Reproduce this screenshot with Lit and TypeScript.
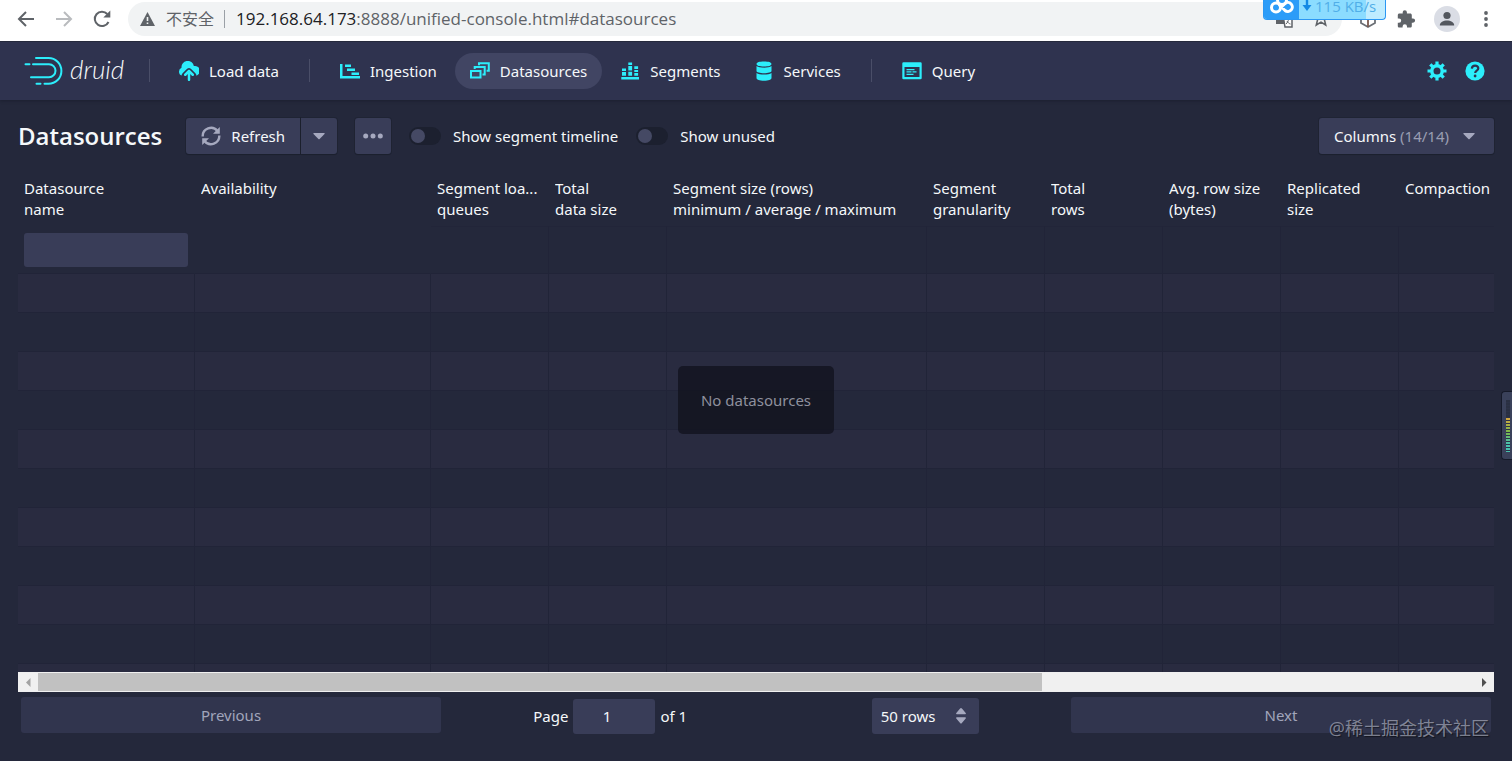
import { LitElement, html, css, svg } from "lit";
import { customElement, state } from "lit/decorators.js";

interface Column {
  width?: number;
  lines: string[];
  filterable?: boolean;
}

const COLUMNS: Column[] = [
  { width: 177, lines: ["Datasource", "name"], filterable: true },
  { width: 236, lines: ["Availability"] },
  { width: 118, lines: ["Segment loa...", "queues"] },
  { width: 118, lines: ["Total", "data size"] },
  { width: 260, lines: ["Segment size (rows)", "minimum / average / maximum"] },
  { width: 118, lines: ["Segment", "granularity"] },
  { width: 118, lines: ["Total", "rows"] },
  { width: 118, lines: ["Avg. row size", "(bytes)"] },
  { width: 118, lines: ["Replicated", "size"] },
  { lines: ["Compaction"] },
];

const PAD_ROWS = Array.from({ length: 40 }, (_, i) => i);

const icons = {
  load: svg`<path transform="scale(1.25)" d="M8.71 7.29C8.53 7.11 8.28 7 8 7s-.53.11-.71.29l-3 3a1 1 0 001.42 1.42L7 10.41V15c0 .55.45 1 1 1s1-.45 1-1v-4.59l1.29 1.29a1 1 0 001.42-1.41zM12 4h-.1A5 5 0 002 5.33 3.5 3.5 0 000 8.5c0 1.41.84 2.61 2.03 3.17.08-.74.38-1.3.84-1.79l3-3C6.44 6.31 7.2 5.6 8 5.6s1.56.7 2.12 1.28l3 3c.5.5.8 1.1.88 1.85A4 4 0 0012 4z"/>`,
  ingestion: svg`<path d="M0 3h2.500v12H20v2.500H0zM5 3.500h6V6H5zM7 7.500h8V10H7zM11.500 11.500H19V14h-7.500z"/>`,
  datasources: svg`<g fill="none" stroke="currentColor" stroke-width="2"><path d="M1 10h9.500v6.500H1z"/><path d="M4.700 8V6h10v7.500H12.500"/><path d="M9 4.300V2.300h9.800v7.500h-2.200"/></g>`,
  segments: svg`<path d="M1.300 16h17.700v2.500H1.300zM2 7.500h4V10H2zM2 11h4v3.700H2zM8.300 1.500h3.800V4H8.300zM8.300 5h3.800v4.500H8.300zM8.300 10.700h3.800v4H8.300zM14.300 5.200h3.800V8h-3.800zM14.300 9h3.800v2h-3.800zM14.300 12h3.800v2.700h-3.800z"/>`,
  services: svg`<path d="M2.500 3C2.500 1.300 5.500.5 10 .5s7.500.8 7.500 2.500S14.500 5.500 10 5.500 2.500 4.700 2.500 3zM2.500 5c1.500 1.200 4.500 1.700 7.500 1.700S16 6.200 17.500 5v5c0 1.400-3.500 2.200-7.500 2.200S2.500 11.400 2.500 10zM2.500 12c1.500 1.100 4.500 1.600 7.500 1.600s6-.5 7.500-1.600v5c0 1.700-3 2.700-7.500 2.700S2.500 18.700 2.500 17z"/>`,
  query: svg`<path fill-rule="evenodd" d="M1.500 1.200h17a1.200 1.200 0 011.200 1.200v14.700a1.200 1.200 0 01-1.200 1.200h-17a1.200 1.200 0 01-1.200-1.200V2.400a1.200 1.200 0 011.200-1.200zM2.500 6v10h15V6z"/><path d="M4.500 8h8v1.200h-8zM4.500 10.300h5v1.200h-5zM10.500 10.300h4v1.200h-4zM4.500 12.700h7v1.200h-7z"/>`,
  gear: svg`<circle cx="10" cy="10" r="5.200" fill="none" stroke="currentColor" stroke-width="3.400"/>${[0, 45, 90, 135].map(
    (a) => svg`<path d="M10 .5v4M10 15.500v4" stroke="currentColor" stroke-width="3.200" transform="rotate(${a} 10 10)"/>`
  )}`,
  help: svg`<circle cx="10" cy="10" r="9.600"/><path d="M6.800 7.600c.2-1.900 1.500-3 3.300-3s3.200 1 3.200 2.700c0 2.400-3.100 2.300-3.100 4.700" fill="none" stroke="#2f334f" stroke-width="2.200"/><circle cx="10.100" cy="15" r="1.400" fill="#2f334f"/>`,
  refresh: svg`<g fill="none" stroke="currentColor" stroke-width="2.400"><path d="M1.700 10.500A8.300 8.300 0 0116.500 5"/><path d="M18.300 9.500A8.300 8.300 0 013.500 15"/></g><path d="M18.800 1v6.800H12zM1.200 19v-6.800H8z"/>`,
  caret: svg`<path d="M4.700 7h10.600q.8.300.2 1L10.600 13q-.6.500-1.200 0L4.500 8q-.5-.7.200-1z"/>`,
  more: svg`<circle cx="2.700" cy="10" r="2.500"/><circle cx="10" cy="10" r="2.500"/><circle cx="17.300" cy="10" r="2.500"/>`,
};

const icon = (shape: unknown) =>
  html`<svg class="icon" viewBox="0 0 20 20" width="20" height="20" fill="currentColor" aria-hidden="true">${shape}</svg>`;

@customElement("browser-bar")
class BrowserBar extends LitElement {
  static styles = css`
    :host {
      display: flex;
      align-items: center;
      position: relative;
      flex: none;
      height: 41px;
      box-sizing: border-box;
      padding: 0 14px 3px 15px;
      background: #fff;
      color: #5f6368;
      font: 16px/20px "Open Sans", "Noto Sans CJK SC", sans-serif;
    }
    button {
      display: flex;
      border: 0;
      padding: 0;
      background: none;
      color: inherit;
    }
    .history { display: flex; gap: 16px; margin-right: 15px; }
    .faded { color: #b9bbbe; }
    .address {
      display: flex;
      align-items: center;
      flex: 1;
      height: 34px;
      padding: 0 12px;
      border-radius: 17px;
      background: #f1f3f4;
    }
    .warning { margin-right: 11px; }
    .separator { width: 1px; height: 18px; margin: 0 11px 0 10px; background: #9aa0a6; }
    .url { flex: 1; font-size: 17px; white-space: nowrap; }
    .host { color: #202124; }
    .page-actions { display: flex; gap: 18px; }
    .extensions { display: flex; align-items: center; gap: 18px; margin-left: 16px; }
    .avatar { border-radius: 50%; background: #dadde5; }
    .speed {
      position: absolute;
      top: 0;
      right: 126px;
      display: flex;
      box-sizing: border-box;
      height: 20px;
      width: 123px;
      overflow: hidden;
      border: 1px solid #2b97f3;
      border-top: 0;
      border-radius: 0 0 4px 4px;
      background: linear-gradient(90deg, #8bdcff 84%, #bfecff 84%);
      color: #50aee8;
      font-size: 15px;
      line-height: 12px;
      white-space: nowrap;
    }
    .cloud { flex: none; margin-right: 2px; background: #2c9cf8; }
    .down { flex: none; margin-right: 2px; }
  `;

  render() {
    return html`
      <div class="history">
        <button aria-label="Back">
          <svg width="22" height="22" viewBox="0 0 22 22" fill="none" stroke="currentColor" stroke-width="2"><path d="M19 11H4.500M11 4l-7 7 7 7" /></svg>
        </button>
        <button class="faded" aria-label="Forward">
          <svg width="22" height="22" viewBox="0 0 22 22" fill="none" stroke="currentColor" stroke-width="2"><path d="M3 11h14.500M11 4l7 7-7 7" /></svg>
        </button>
        <button aria-label="Reload">
          <svg width="22" height="22" viewBox="0 0 22 22"><path d="M17.500 14A7.200 7.200 0 1116.300 6" fill="none" stroke="currentColor" stroke-width="2" /><path d="M19.300 2.500v7h-7z" fill="currentColor" /></svg>
        </button>
      </div>
      <div class="address">
        <svg class="warning" width="15" height="14" viewBox="0 0 15 14"><path d="M7.500 0L15 14H0z" fill="currentColor" /><path d="M7.500 5v4M7.500 10.500v1.600" stroke="#f1f3f4" stroke-width="1.600" /></svg>
        <span>不安全</span>
        <span class="separator"></span>
        <span class="url"><span class="host">192.168.64.173</span>:8888/unified-console.html#datasources</span>
        <div class="page-actions">
          <button aria-label="Translate">
            <svg width="20" height="20" viewBox="0 0 20 20"><path d="M2 2h9l4 13H2z" fill="currentColor" /><path d="M9 6h9v12h-7z" fill="#fff" stroke="currentColor" stroke-width="1.500" /><path d="M12 10h5M14.500 9v1c0 2-1 3.500-2.500 5M13 12c1 2 2 2.500 3.500 3" fill="none" stroke="currentColor" /></svg>
          </button>
          <button aria-label="Bookmark">
            <svg width="18" height="18" viewBox="0 0 18 18" fill="none" stroke="currentColor" stroke-width="1.600"><path d="M9 1.500l2.100 5 5.400.5-4.100 3.600 1.300 5.400L9 13.100 4.300 16l1.300-5.400L1.500 7l5.400-.5z" /></svg>
          </button>
        </div>
      </div>
      <div class="extensions">
        <button aria-label="Package extension">
          <svg width="20" height="20" viewBox="0 0 20 20" fill="none" stroke-width="1.800"><path d="M10 2l7 4v8l-7 4-7-4V6z" stroke="#6b6f75" /><path d="M3 6l7 4 7-4M10 10v8" stroke="#7b5a50" /></svg>
        </button>
        <button aria-label="Extensions">
          <svg width="20" height="20" viewBox="0 0 20 20" fill="currentColor"><path d="M17 9.500h-1.200V6.200c0-.9-.7-1.600-1.600-1.600h-3.300V3.300a2.100 2.100 0 00-4.200 0v1.300H3.400c-.9 0-1.600.7-1.600 1.600v3.200H3a2.200 2.200 0 010 4.400H1.800V17c0 .9.700 1.600 1.600 1.600h3.200v-1.200a2.200 2.200 0 014.400 0v1.200h3.200c.9 0 1.600-.7 1.600-1.600v-3.300H17a2.100 2.100 0 000-4.200z" /></svg>
        </button>
        <button class="avatar" aria-label="Profile">
          <svg width="26" height="26" viewBox="0 0 26 26" fill="#53575e"><circle cx="13" cy="9.500" r="3.600" /><path d="M5.800 19.500c0-3.500 3.600-5 7.200-5s7.200 1.500 7.200 5z" /></svg>
        </button>
        <button aria-label="Menu">
          <svg width="20" height="20" viewBox="0 0 20 20" fill="currentColor"><circle cx="8" cy="4" r="1.900" /><circle cx="8" cy="10" r="1.900" /><circle cx="8" cy="16" r="1.900" /></svg>
        </button>
      </div>
      <div class="speed">
        <svg class="cloud" width="35" height="20" viewBox="0 0 35 20" fill="none" stroke="#fff" stroke-width="3"><circle cx="18" cy="0" r="4.500" /><circle cx="12" cy="7.500" r="4.500" /><path d="M15 4.500l6 6a4.500 4.500 0 100-7l-4 4" /></svg>
        <svg class="down" width="12" height="12" viewBox="0 0 12 12"><path d="M6 0v6" stroke="#1489e4" stroke-width="2.400" /><path d="M1.500 5h9L6 11z" fill="#1489e4" /></svg>
        <span>115 KB/s</span>
      </div>
    `;
  }
}

@customElement("console-header")
class ConsoleHeader extends LitElement {
  static styles = css`
    :host {
      display: flex;
      align-items: center;
      flex: none;
      height: 59px;
      box-sizing: border-box;
      padding: 0 27px 0 24px;
      background: #2f334f;
      box-shadow: inset 0 1px 0 #25293c, 0 1px 3px rgba(16, 18, 30, 0.4);
      color: #f5f8fa;
      font: 15px/20px "Noto Sans", "Open Sans", sans-serif;
    }
    a { color: inherit; text-decoration: none; }
    .logo { display: flex; align-items: center; gap: 6px; width: 110px; }
    .wordmark { font: italic 300 26px/32px Lato, sans-serif; padding-bottom: 4px; }
    nav { display: flex; align-items: center; gap: 3px; flex: 1; }
    .item {
      display: flex;
      align-items: center;
      gap: 10px;
      height: 36px;
      padding: 0 15px;
      border-radius: 18px;
    }
    .active { background: #414563; }
    .divider { width: 1px; height: 23px; margin: 0 12px; background: #4a4e68; }
    .logo + .divider { margin: 0 14px 0 15px; }
    .icon { color: #2ceefb; display: block; }
    .tools { display: flex; gap: 18px; }
    .tools button { border: 0; padding: 0; background: none; }
  `;

  private item(label: string, shape: unknown, active = false) {
    return html`<a class="item ${active ? "active" : ""}" href="#${label.toLowerCase().replace(" ", "-")}">${icon(shape)}<span>${label}</span></a>`;
  }

  render() {
    return html`
      <a class="logo" href="#" aria-label="druid home">
        <svg width="40" height="30" viewBox="0 0 40 30" fill="none" stroke="#2ceefb" stroke-width="2" stroke-linecap="round">
          <path d="M12 2h12.500a12.900 12.900 0 010 25.800H20.500M12.500 27.800H16.500M9 8.200h16a6.500 6.500 0 010 13H7M1.500 8.200h4" />
        </svg>
        <span class="wordmark">druid</span>
      </a>
      <span class="divider"></span>
      <nav>
        ${this.item("Load data", icons.load)}
        <span class="divider"></span>
        ${this.item("Ingestion", icons.ingestion)}
        ${this.item("Datasources", icons.datasources, true)}
        ${this.item("Segments", icons.segments)}
        ${this.item("Services", icons.services)}
        <span class="divider"></span>
        ${this.item("Query", icons.query)}
      </nav>
      <div class="tools">
        <button aria-label="Settings">${icon(icons.gear)}</button>
        <button aria-label="Help">${icon(icons.help)}</button>
      </div>
    `;
  }
}

@customElement("datasources-view")
class DatasourcesView extends LitElement {
  @state() private timeline = false;
  @state() private unused = false;

  static styles = css`
    :host {
      display: flex;
      flex-direction: column;
      flex: 1;
      min-height: 0;
      padding: 18px 18px 27px;
      color: #f5f8fa;
      font: 15px/21px "Noto Sans", "Open Sans", sans-serif;
    }
    button, input, select { font: inherit; color: inherit; }
    .toolbar { display: flex; align-items: center; gap: 18px; margin-bottom: 18px; }
    h1 { margin: 0 6px 0 0; font: 600 24px/36px "Open Sans", sans-serif; }
    .btn {
      display: flex;
      align-items: center;
      justify-content: center;
      gap: 10px;
      height: 36px;
      box-sizing: border-box;
      padding: 0 15px;
      border: 0;
      border-radius: 3px;
      background: #393d58;
      box-shadow: 0 0 0 1px rgba(16, 22, 26, 0.2), 0 1px 1px rgba(16, 22, 26, 0.2);
    }
    .group { display: flex; gap: 1px; }
    .group .btn:first-child { border-radius: 3px 0 0 3px; }
    .group .btn:last-child { border-radius: 0 3px 3px 0; }
    .square { width: 36px; padding: 0; }
    .icon { flex: none; color: #a6a9bf; }
    .switch { display: flex; align-items: center; gap: 12px; }
    .switch input {
      appearance: none;
      display: flex;
      align-items: center;
      width: 32px;
      height: 18px;
      margin: 0;
      padding: 0 2px;
      border-radius: 9px;
      background: #1c202f;
    }
    .switch input::before { content: ""; width: 14px; height: 14px; border-radius: 50%; background: #454964; }
    .switch input:checked { justify-content: flex-end; background: #2ceefb; }
    .columns { margin-left: auto; }
    .muted { color: #9a9db2; }
    .table-area { position: relative; flex: 1; min-height: 0; overflow: hidden; }
    table { width: 100%; table-layout: fixed; border-collapse: separate; border-spacing: 0; }
    th, td { box-sizing: border-box; border-right: 1px solid #212438; text-align: left; font-weight: 400; vertical-align: top; }
    th { height: 54px; padding: 6px 5px 6px 6px; border-color: transparent; }
    th:last-child { padding-right: 0; }
    th:last-child, td:last-child { border-right: 0; }
    .line { display: block; overflow: hidden; text-overflow: ellipsis; white-space: nowrap; }
    .filters td { height: 47px; padding: 6px; border-top: 1px solid #222539; border-bottom: 1px solid #212438; }
    .filters td:nth-child(-n + 2) { border-right-color: transparent; border-top-color: transparent; }
    .filter {
      display: block;
      width: 100%;
      height: 34px;
      box-sizing: border-box;
      padding: 0 10px;
      border: 0;
      border-radius: 3px;
      background: #393d58;
    }
    .pad td { height: 39px; padding: 0; border-bottom: 1px solid #212438; }
    .pad:nth-child(odd) td { background: #292b40; }
    .empty {
      position: absolute;
      inset: 0 0 44px;
      width: fit-content;
      height: fit-content;
      margin: auto;
      padding: 23px;
      border-radius: 5px;
      background: rgba(16, 18, 28, 0.75);
      color: #8e909d;
      line-height: 22px;
    }
    .scrollbar { display: flex; flex: none; height: 20px; background: #f0f0f0; }
    .scrollbar button { width: 20px; padding: 0; border: 0; background: none; color: #505050; }
    .scrollbar button:disabled { color: #a3a3a3; }
    .scrollbar svg { display: block; }
    .track { flex: 1; padding: 1px 0; }
    .thumb { height: 18px; background: #c1c1c1; }
    .pagination { position: relative; display: flex; flex: none; padding: 5px 3px 0; }
    .step { flex: 1 1 0; }
    .step .btn { width: 100%; background: #31354e; color: #a1a5bb; box-shadow: none; }
    .center { display: flex; flex: 1.5 1 0; justify-content: space-around; align-items: center; padding-top: 1px; }
    .page { display: flex; align-items: center; gap: 5px; }
    .page input {
      width: 82px;
      height: 35px;
      box-sizing: border-box;
      border: 0;
      border-radius: 3px;
      padding: 0 10px;
      background: #393d58;
      text-align: center;
    }
    .size { position: relative; display: flex; align-items: center; }
    .size select {
      appearance: none;
      width: 107px;
      height: 36px;
      border: 0;
      border-radius: 3px;
      padding: 0 30px 0 9px;
      background: #393d58;
    }
    .size svg { position: absolute; right: 13px; pointer-events: none; color: #a6a9bf; }
    .watermark {
      position: absolute;
      right: 5px;
      top: 23px;
      color: rgba(190, 193, 208, 0.6);
      font: 18px/26px "Open Sans", "Noto Sans CJK SC", sans-serif;
      text-shadow: 1px 1px 1px rgba(0, 0, 0, 0.5);
      pointer-events: none;
    }
  `;

  render() {
    return html`
      <div class="toolbar">
        <h1>Datasources</h1>
        <div class="group">
          <button class="btn">${icon(icons.refresh)}Refresh</button>
          <button class="btn square" aria-label="Refresh interval">${icon(icons.caret)}</button>
        </div>
        <button class="btn square" aria-label="More">${icon(icons.more)}</button>
        <label class="switch">
          <input type="checkbox" role="switch" .checked=${this.timeline} @change=${() => (this.timeline = !this.timeline)} />
          Show segment timeline
        </label>
        <label class="switch">
          <input type="checkbox" role="switch" .checked=${this.unused} @change=${() => (this.unused = !this.unused)} />
          Show unused
        </label>
        <button class="btn columns"><span>Columns <span class="muted">(14/14)</span></span>${icon(icons.caret)}</button>
      </div>

      <div class="table-area">
        <table>
          <colgroup>
            ${COLUMNS.map((c) => html`<col width=${c.width ?? "auto"} />`)}
          </colgroup>
          <thead>
            <tr>
              ${COLUMNS.map((c) => html`<th scope="col">${c.lines.map((l) => html`<span class="line">${l}</span>`)}</th>`)}
            </tr>
            <tr class="filters">
              ${COLUMNS.map((c) => html`<td>${c.filterable ? html`<input class="filter" type="text" aria-label="Datasource name" />` : ""}</td>`)}
            </tr>
          </thead>
          <tbody>
            ${PAD_ROWS.map(() => html`<tr class="pad">${COLUMNS.map(() => html`<td></td>`)}</tr>`)}
          </tbody>
        </table>
        <div class="empty">No datasources</div>
      </div>
      <div class="scrollbar">
        <button disabled aria-label="Scroll left"><svg width="20" height="20"><path d="M12.500 6v9L8 10.500z" fill="currentColor" /></svg></button>
        <div class="track"><div class="thumb" style="width: ${((1476 / 2113) * 100).toFixed(1)}%"></div></div>
        <button aria-label="Scroll right"><svg width="20" height="20"><path d="M8 6v9l4.500-4.500z" fill="currentColor" /></svg></button>
      </div>

      <div class="pagination">
        <div class="step"><button class="btn" disabled>Previous</button></div>
        <div class="center">
          <div class="page">
            <label for="page">Page</label>
            <input id="page" type="number" value="1" />
            <span>of 1</span>
          </div>
          <div class="size">
            <select aria-label="Rows per page"><option>50 rows</option></select>
            <svg width="10" height="16" viewBox="0 0 10 16" fill="currentColor"><path d="M5 0q.5 0 .9.500L9.700 5q.6 1-.5 1.300H.8Q-.3 6 .3 5L4.100.5Q4.500 0 5 0zM.8 9.200h8.400q1.100.3.500 1.300l-3.800 4.500q-.9 1-1.800 0L.3 10.500q-.6-1 .5-1.300z" /></svg>
          </div>
        </div>
        <div class="step"><button class="btn" disabled>Next</button></div>
        <span class="watermark">@稀土掘金技术社区</span>
      </div>
    `;
  }
}

@customElement("app-root")
class AppRoot extends LitElement {
  static styles = css`
    :host {
      display: flex;
      flex-direction: column;
      position: relative;
      height: 100vh;
      overflow: hidden;
      background: #24283b;
    }
    .meter {
      position: absolute;
      right: 0;
      top: 391px;
      box-sizing: border-box;
      width: 11px;
      height: 69px;
      padding: 8px 2px 7px 4px;
      border: 1px solid #161a29;
      border-right: 0;
      border-radius: 4px 0 0 4px;
      background: #3a415a;
    }
    .scale {
      height: 100%;
      background:
        repeating-linear-gradient(transparent 0 2px, #2c3247 2px 3px),
        linear-gradient(#2a3042 34%, #d8a53f 34%, #79b84a 62%, #46c2ae 84%, #46c2ae);
    }
  `;

  render() {
    return html`
      <browser-bar></browser-bar>
      <console-header></console-header>
      <datasources-view></datasources-view>
      <div class="meter"><div class="scale"></div></div>
    `;
  }
}
